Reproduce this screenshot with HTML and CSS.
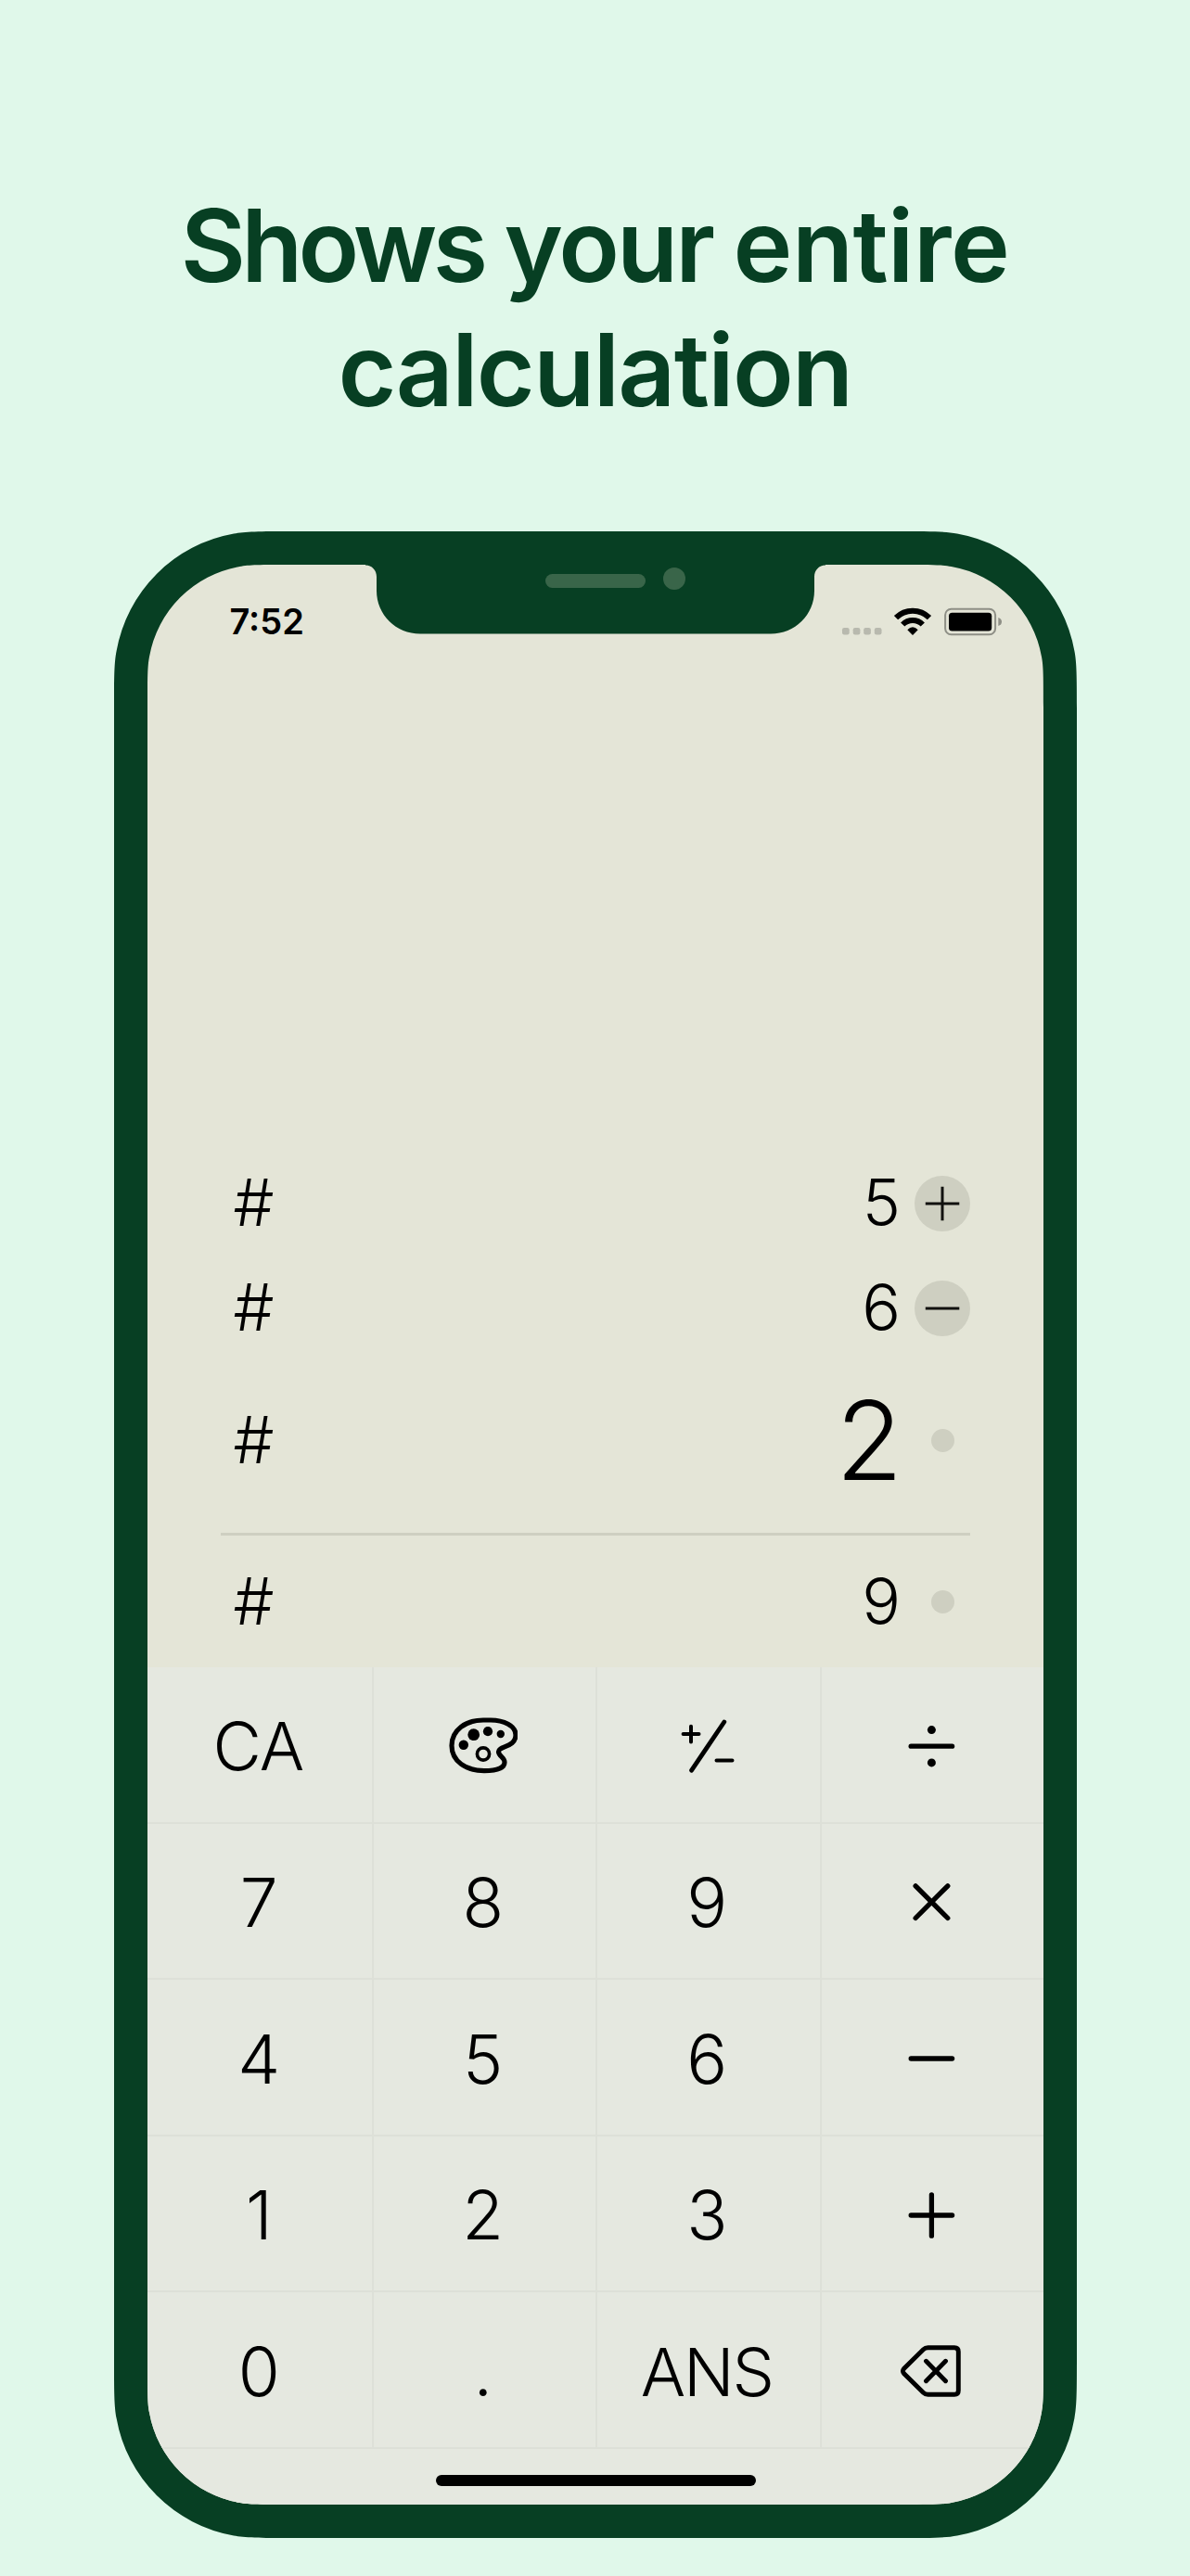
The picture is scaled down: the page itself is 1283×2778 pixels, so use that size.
FILE: index.html
```html
<!DOCTYPE html>
<html lang="en">
<head>
<meta charset="utf-8">
<title>Calculator</title>
<link rel="stylesheet" href="styles.css">
</head>
<body>
<main class="page">
  <h1 class="headline"><span class="tight">Shows</span> <span>your</span> <span class="wide">entire</span><br><span class="second">calculation</span></h1>
  <div class="phone">
    <div class="screen">
      <div class="notch">
        <svg width="496" height="75" viewBox="0 0 496 75"><path fill="#073f23" d="M0 0H496V.5C489 .5 484 6 484 13V28C484 54 463 74.500 437 74.500H59C33 74.500 12 54 12 28V13C12 6 7 .5 0 .5Z"/></svg>
        <span class="speaker"></span>
        <span class="camera"></span>
      </div>
      <header class="status">
        <span class="time">7:52</span>
        <svg class="status-icons" width="174" height="32" viewBox="0 0 174 32">
          <g fill="#b8b9ae"><rect x="1" y="23" width="7.700" height="7.500" rx="2.200"/><rect x="12.700" y="23" width="7.700" height="7.500" rx="2.200"/><rect x="24.200" y="23" width="7.700" height="7.500" rx="2.200"/><rect x="35.800" y="23" width="7.700" height="7.500" rx="2.200"/></g>
          <g fill="none" stroke="#000" stroke-width="6"><path d="M59 12.200A25.500 25.500 0 0 1 95 12.200"/><path d="M66.200 19.500A15.300 15.300 0 0 1 87.800 19.500"/></g>
          <path d="M77 31L71.300 25.200Q77 19.500 82.700 25.200Z"/>
          <rect x="112.100" y="2.700" width="54" height="27.600" rx="6.500" fill="none" stroke="#8e8f86" stroke-width="2"/>
          <rect x="116" y="6.700" width="46.200" height="19.800" rx="3.500"/>
          <path fill="#8e8f86" d="M169.300 12Q173 13 173 16.500Q173 20 169.300 21Z"/>
        </svg>
      </header>
      <section class="tape">
        <div class="row"><span class="label">#</span><span class="value">5</span><span class="op"><svg width="60" height="60" viewBox="0 0 60 60"><circle cx="30" cy="30" r="30" fill="#cecfc1"/><path d="M11.800 30H48.300M30 11.700V48.300" stroke="#11110f" stroke-width="3"/></svg></span></div>
        <div class="row"><span class="label">#</span><span class="value">6</span><span class="op"><svg width="60" height="60" viewBox="0 0 60 60"><circle cx="30" cy="30" r="30" fill="#cecfc1"/><path d="M11.800 30H48.300" stroke="#11110f" stroke-width="3"/></svg></span></div>
        <div class="row current"><span class="label">#</span><span class="value">2</span><span class="op"><span class="dot"></span></span></div>
        <div class="rule"></div>
        <div class="row"><span class="label">#</span><span class="value">9</span><span class="op"><span class="dot"></span></span></div>
      </section>
      <section class="keys">
        <div class="key word">CA</div>
        <div class="key"><svg width="74" height="62" viewBox="0 0 74 62"><path d="M37 3C18 3 3 14 3 30.500C3 47 18 57.600 38 57.600C53 57.600 60 54 60 48.500C60 43 53.500 42 53.500 37C53.500 31 72 32.500 72 19C72 9 59 3 45 3Z" fill="none" stroke="#000" stroke-width="5.200"/><circle cx="15.800" cy="29.700" r="5.200"/><circle cx="26.700" cy="18.700" r="6.400"/><circle cx="42" cy="15.200" r="5.100"/><circle cx="55.800" cy="18" r="4.200"/><circle cx="37" cy="39.500" r="6.600" fill="none" stroke="#000" stroke-width="3.600"/></svg></div>
        <div class="key"><svg width="60" height="60" viewBox="0 0 60 60" stroke="#000" fill="none" stroke-linecap="round"><path stroke-width="4.800" d="M47.800 4L12.600 56.200"/><path stroke-width="4" d="M3.600 17H20.500M12 8.800V25.500M39.500 45.500H56.500"/></svg></div>
        <div class="key"><svg width="60" height="60" viewBox="0 0 60 60"><path d="M8.200 30.200H52.600" stroke="#000" stroke-width="5.300" stroke-linecap="round"/><circle cx="30.400" cy="12.600" r="4.500"/><circle cx="30.400" cy="47.900" r="4.500"/></svg></div>
        <div class="key digit">7</div><div class="key digit">8</div><div class="key digit">9</div>
        <div class="key"><svg width="60" height="60" viewBox="0 0 60 60" stroke="#000" stroke-width="5.300" stroke-linecap="round"><path d="M13.100 12.800L47.800 47.500M47.800 12.800L13.100 47.500"/></svg></div>
        <div class="key digit">4</div><div class="key digit">5</div><div class="key digit">6</div>
        <div class="key"><svg width="60" height="60" viewBox="0 0 60 60" stroke="#000" stroke-width="5.300" stroke-linecap="round"><path d="M8.200 30H52.600"/></svg></div>
        <div class="key digit">1</div><div class="key digit">2</div><div class="key digit">3</div>
        <div class="key"><svg width="60" height="60" viewBox="0 0 60 60" stroke="#000" stroke-width="5.300" stroke-linecap="round"><path d="M8.200 30H52.600M30.400 7.800V52.200"/></svg></div>
        <div class="key digit">0</div><div class="key digit">.</div><div class="key word ans">ANS</div>
        <div class="key"><svg width="66" height="60" viewBox="0 0 66 60" stroke="#000" stroke-width="4.900" fill="none" stroke-linecap="round"><path d="M29.500 4.700H58Q62.300 4.700 62.300 9V51Q62.300 55.300 58 55.300H29.500Q26.500 55.300 24.500 53.300L3.500 32.500Q1.500 30 3.500 27.500L24.500 6.700Q26.500 4.700 29.500 4.700Z"/><path d="M27.500 19.300L48.500 40.700M48.500 19.300L27.500 40.700"/></svg></div>
      </section>
      <footer class="home"><span class="home-bar"></span></footer>
    </div>
  </div>
</main>
</body>
</html>
```
FILE: styles.css
```css
* { box-sizing: border-box; }
body { margin: 0; background: #e0f8ea; font-family: Inter, "Liberation Sans", sans-serif; }
.page { width: 1283px; height: 2778px; padding-top: 198px; overflow: hidden; }
.headline { margin: 0; height: 375px; text-align: center; color: #073f23; font-weight: 600; font-size: 108px; line-height: 134px; letter-spacing: -2.900px; word-spacing: -2px; white-space: nowrap; }
.tight { letter-spacing: -4.800px; }
.wide { letter-spacing: -0.500px; }
.second { letter-spacing: -1.600px; }
.phone {
  width: 1038px; height: 2164px; margin-left: 123px; padding: 36px; background: #073f23;
  clip-path: path("M200 0H838C879.7 0 895.6 0 908.9 2.6A156 156 0 0 1 1035.400 129.100C1038 142.400 1038 158.300 1038 200V1964C1038 2005.700 1038 2021.600 1035.400 2034.900A156 156 0 0 1 908.9 2161.400C895.6 2164 879.7 2164 838 2164H200C158.300 2164 142.400 2164 129.100 2161.400A156 156 0 0 1 2.600 2034.900C0 2021.600 0 2005.700 0 1964V200C0 158.300 0 142.400 2.600 129.100A156 156 0 0 1 129.100 2.600C142.400 0 158.300 0 200 0Z");
}
.screen {
  position: relative; display: flex; flex-direction: column; width: 966px; height: 2092px; background: #e4e5d7;
  clip-path: path("M154 0H812C844.3 0 856.5 0 866.7 2A120 120 0 0 1 964 99.300C966 109.500 966 121.700 966 154V1938C966 1970.300 966 1982.500 964 1992.700A120 120 0 0 1 866.7 2090C856.5 2092 844.3 2092 812 2092H154C121.700 2092 109.500 2092 99.300 2090A120 120 0 0 1 2 1992.700C0 1982.500 0 1970.300 0 1938V154C0 121.700 0 109.500 2 99.300A120 120 0 0 1 99.300 2C109.500 0 121.700 0 154 0Z");
}
.notch { position: absolute; left: 235px; top: -0.500px; width: 496px; height: 75px; }
.notch svg { display: block; }
.speaker { position: absolute; left: 194px; top: 10.500px; width: 108px; height: 15px; border-radius: 8px; background: #396549; }
.camera { position: absolute; left: 321px; top: 3.500px; width: 24px; height: 24px; border-radius: 50%; background: #396549; }
.status { display: flex; justify-content: space-between; align-items: center; height: 122px; padding: 0 44px 0 88.500px; }
.time { font-size: 38px; font-weight: 600; }
.status-icons { display: block; }
.tape { flex: 1; display: flex; flex-direction: column; justify-content: flex-end; padding: 0 79px 14px; }
.row { display: flex; align-items: center; height: 113px; padding-left: 13.500px; font-size: 69.500px; font-weight: 300; line-height: 113px; }
.label { flex: 1; }
.value { margin-right: 15px; }
.op { display: flex; align-items: center; justify-content: center; width: 60px; }
.op svg { display: block; }
.dot { width: 25px; height: 25px; border-radius: 50%; background: #cecfc1; }
.current { height: 172px; }
.current .value { margin-right: 12.500px; font-size: 118px; }
.rule { height: 3px; margin: 14px 0 15px; background: #cecfc1; }
.keys { display: grid; grid-template-columns: repeat(4, 241.500px); grid-auto-rows: 168.600px; background: #e5e8e0; }
.key { display: flex; align-items: center; justify-content: center; padding-top: 1px; font-size: 72px; font-weight: 300; box-shadow: inset 2px 0 #dde0d8, inset 0 -2px #dde0d8; }
.key:nth-child(4n + 1) { box-shadow: inset 0 -2px #dde0d8; }
.digit { padding-right: 1px; font-size: 73px; }
.word { padding-right: 3px; letter-spacing: -1px; }
.ans { padding-right: 2px; letter-spacing: -2.200px; }
.home { display: flex; justify-content: center; height: 60px; padding-top: 28px; background: #e5e8e0; }
.home-bar { width: 345px; height: 12px; border-radius: 6px; background: #000; }
```
